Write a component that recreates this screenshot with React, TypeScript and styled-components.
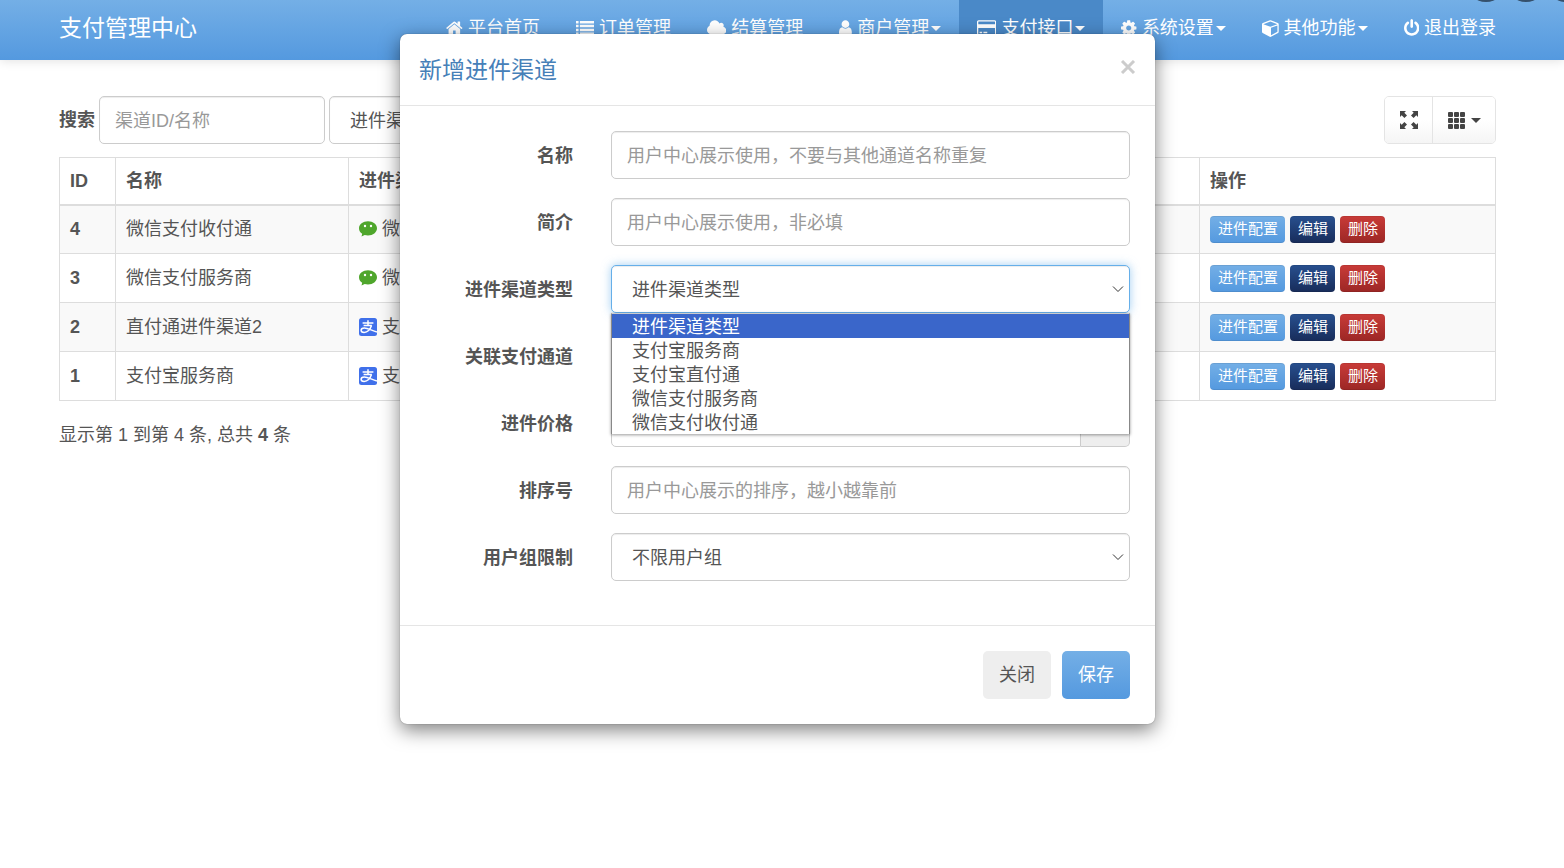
import React from "react";
import styled, { createGlobalStyle, css } from "styled-components";

const GlobalStyle = createGlobalStyle`
  *, *::before, *::after { box-sizing: border-box; }
  html, body { margin: 0; min-height: 100%; background: #fff; }
  body, button, input, select {
    font-family: "Liberation Sans", "Noto Sans CJK SC", sans-serif;
    font-size: 18px;
    line-height: 26px;
    color: #555;
  }
  h1, h2, p { margin: 0; font-weight: 400; }
`;

const blueGradient = "linear-gradient(#74afe6, #5499df)";

/* ---------- icons ---------- */

const FontIcon = styled.svg`
  height: 18px;
  width: auto;
  flex: none;
  fill: currentColor;
`;

const icons = {
  home: {
    box: "64 0 1664 1792",
    d: "M1472 992v480q0 26-19 45t-45 19h-384v-384h-256v384h-384q-26 0-45-19t-19-45v-480q0-1 .5-3t.5-3l575-474 575 474q1 2 1 6zm223-69l-62 74q-8 9-21 11h-3q-13 0-21-7l-692-577-692 577q-12 8-24 7-13-2-21-11l-62-74q-8-10-7-23.5t11-21.5l719-599q32-26 76-26t76 26l244 204v-195q0-14 9-23t23-9h192q14 0 23 9t9 23v408l219 182q10 8 11 21.5t-7 23.5z",
  },
  list: {
    box: "0 0 1792 1792",
    d: "M0 192h256v256H0zM384 192h1408v256H384zM0 576h256v256H0zM384 576h1408v256H384zM0 960h256v256H0zM384 960h1408v256H384zM0 1344h256v256H0zM384 1344h1408v256H384z",
  },
  cloud: {
    box: "64 0 1920 1792",
    d: "M1984 1152q0 159-112.5 271.5t-271.5 112.5h-1088q-185 0-316.5-131.5t-131.5-316.5q0-132 71-241.5t187-163.5q-2-28-2-43 0-212 150-362t362-150q158 0 286.5 88t187.5 230q70-62 166-62 106 0 181 75t75 181q0 75-41 138 129 30 213 134.5t84 239.5z",
  },
  user: {
    box: "0 0 1280 1792",
    d: "M1280 1399q0 109-62.5 187t-150.5 78h-854q-88 0-150.5-78t-62.5-187q0-85 8.5-160.5t31.5-152 58.5-131 94-89 134.5-34.5q131 128 313 128t313-128q76 0 134.5 34.5t94 89 58.5 131 31.5 152 8.5 160.5zm-256-887q0 159-112.5 271.5t-271.5 112.5-271.5-112.5-112.5-271.5 112.5-271.5 271.5-112.5 271.5 112.5 112.5 271.5z",
  },
  card: {
    box: "0 0 1920 1792",
    d: "M1760 128q66 0 113 47t47 113v1216q0 66-47 113t-113 47h-1600q-66 0-113-47t-47-113v-1216q0-66 47-113t113-47h1600zm-1600 128q-13 0-22.5 9.5t-9.5 22.5v224h1664v-224q0-13-9.5-22.5t-22.5-9.5h-1600zm1600 1280q13 0 22.5-9.5t9.5-22.5v-608h-1664v608q0 13 9.5 22.5t22.5 9.5h1600zm-1504-128v-128h256v128h-256zm384 0v-128h384v128h-384z",
  },
  cog: {
    box: "128 0 1536 1792",
    d: "M1152 896q0-106-75-181t-181-75-181 75-75 181 75 181 181 75 181-75 75-181zm512-109v222q0 12-8 23t-20 13l-185 28q-19 54-39 91 35 50 107 138 10 12 10 25t-9 23q-27 37-99 108t-94 71q-12 0-26-9l-138-108q-44 23-91 38-16 136-29 186-7 28-36 28h-222q-14 0-24.5-8.5t-11.5-21.5l-28-184q-49-16-90-37l-141 107q-10 9-25 9-14 0-25-11-126-114-165-168-7-10-7-23 0-12 8-23 15-21 51-66.5t54-70.5q-27-50-41-99l-183-27q-13-2-21-12.5t-8-23.5v-222q0-12 8-23t19-13l186-28q14-46 39-92-40-57-107-138-10-12-10-24 0-10 9-23 26-36 98.5-107.5t94.5-71.5q13 0 26 10l138 107q44-23 91-38 16-136 29-186 7-28 36-28h222q14 0 24.5 8.5t11.5 21.5l28 184q49 16 90 37l142-107q9-9 24-9 13 0 25 10 129 119 165 170 7 8 7 22 0 12-8 23-15 21-51 66.5t-54 70.5q26 50 41 98l183 28q13 2 21 12.5t8 23.5z",
  },
  cube: {
    box: "0 0 1664 1792",
    d: "M896 1629l640-349v-636l-640 233v752zm-64-865l698-254-698-254-698 254zm832-252v768q0 35-18 65t-49 47l-704 384q-28 16-61 16t-61-16l-704-384q-31-17-49-47t-18-65v-768q0-40 23-73t61-47l704-256q22-8 44-8t44 8l704 256q38 14 61 47t23 73z",
  },
  power: {
    box: "128 0 1536 1792",
    d: "M1664 896q0 156-61 298t-164 245-245 164-298 61-298-61-245-164-164-245-61-298q0-182 80.5-343t226.5-270q43-32 95.5-25t83.5 50q32 42 24.5 94.5t-49.5 84.5q-98 74-151.5 181t-53.5 228q0 104 40.5 198.5t109.5 163.5 163.5 109.5 198.5 40.5 198.5-40.5 163.5-109.5 109.5-163.5 40.5-198.5q0-121-53.5-228t-151.5-181q-42-32-49.5-84.5t24.5-94.5q31-43 84-50t95 25q146 109 226.5 270t80.5 343zm-640-768v640q0 52-38 90t-90 38-90-38-38-90v-640q0-52 38-90t90-38 90 38 38 90z",
  },
};

type IconName = keyof typeof icons;

const Icon = ({ name }: { name: IconName }) => (
  <FontIcon viewBox={icons[name].box} aria-hidden="true">
    <path d={icons[name].d} />
  </FontIcon>
);

const Caret = styled.span`
  width: 10px;
  height: 5px;
  border: 5px solid transparent;
  border-top-color: currentColor;
  border-bottom: 0;
`;

const BrandSvg = styled.svg`
  width: 18px;
  height: 18px;
  flex: none;
`;

const WechatIcon = () => (
  <BrandSvg viewBox="0 0 18 18" aria-hidden="true">
    <path
      d="M9 1.2c-5 0-9 3-9 7 0 2.300 1.200 4.200 3.200 5.500l-.7 2.800 3.200-1.600c1 .3 2.100.5 3.300.5 5 0 9-3.100 9-7.200S14 1.200 9 1.200z"
      fill="#4fa62c"
    />
    <circle cx="6" cy="6" r="1.2" fill="#fff" />
    <circle cx="12" cy="6" r="1.2" fill="#fff" />
  </BrandSvg>
);

const AlipayIcon = () => (
  <BrandSvg viewBox="0 0 18 18" aria-hidden="true">
    <rect width="18" height="18" rx="2.5" fill="#4070ea" />
    <g fill="none" stroke="#fff" strokeWidth="1.5">
      <path d="M3.6 4.900h10.800M9 2.200v5.400M4.600 7.600h8.200" />
      <path d="M12.500 7.600c-1.200 3.600-4 6.800-7.400 6.800-2 0-3-1-3-2.200 0-1.400 1.400-2.300 3.200-2.300 3.400 0 6.900 2.400 12.700 4.200" />
    </g>
  </BrandSvg>
);

const ToolSvg = styled.svg`
  width: 18px;
  height: 18px;
  fill: #444;
`;

const FullscreenIcon = () => (
  <ToolSvg viewBox="0 0 18 18" aria-hidden="true">
    {[0, 90, 180, 270].map((turn) => (
      <path key={turn} transform={`rotate(${turn} 9 9)`} d="M0 0h6L4.300 1.700 7 4.400 4.400 7 1.700 4.300 0 6z" />
    ))}
  </ToolSvg>
);

const GridIcon = () => (
  <ToolSvg viewBox="0 0 18 18" aria-hidden="true">
    {[1, 7, 13].map((y) =>
      [0, 6, 12].map((x) => <rect key={`${x}-${y}`} x={x} y={y} width="5" height="5" rx="1" />)
    )}
  </ToolSvg>
);

/* ---------- navigation ---------- */

const NavBar = styled.header`
  position: relative;
  display: flex;
  justify-content: space-between;
  height: 60px;
  padding: 0 50px 0 59px;
  background: ${blueGradient};
  box-shadow: 0 1px 10px rgba(0, 0, 0, 0.12);
`;

const Brand = styled.a`
  padding-top: 15px;
  font-size: 23px;
  color: #fff;
  text-decoration: none;
  white-space: nowrap;
`;

const NavList = styled.nav`
  display: flex;
`;

const NavLink = styled.a<{ $active?: boolean }>`
  display: flex;
  align-items: center;
  gap: 5px;
  padding: 0 18px 4px;
  color: #fff;
  text-decoration: none;
  white-space: nowrap;
  ${(p) => p.$active && css`background: #4a89c8;`}
`;

const NavText = styled.span`
  display: flex;
  align-items: center;
  gap: 2px;
`;

const FloatingTools = styled.svg`
  position: absolute;
  top: 0;
  right: 0;
`;

const navItems: { icon: IconName; label: string; menu?: boolean; active?: boolean }[] = [
  { icon: "home", label: "平台首页" },
  { icon: "list", label: "订单管理" },
  { icon: "cloud", label: "结算管理" },
  { icon: "user", label: "商户管理", menu: true },
  { icon: "card", label: "支付接口", menu: true, active: true },
  { icon: "cog", label: "系统设置", menu: true },
  { icon: "cube", label: "其他功能", menu: true },
  { icon: "power", label: "退出登录" },
];

/* ---------- form controls ---------- */

const control = css`
  display: block;
  width: 100%;
  height: 48px;
  border: 1px solid #ccc;
  border-radius: 5px;
  background: #fff;
  box-shadow: inset 0 1px 1px rgba(0, 0, 0, 0.075);
  outline: 0;
`;

const TextInput = styled.input`
  ${control}
  padding: 2px 15px 0;
  &::placeholder { color: #999; opacity: 1; }
`;

const SelectWrap = styled.div`
  position: relative;
`;

const Select = styled.select<{ $focused?: boolean }>`
  ${control}
  padding: 1px 20px 0;
  appearance: none;
  ${(p) =>
    p.$focused &&
    css`
      border-color: #66afe9;
      box-shadow: inset 0 1px 1px rgba(0, 0, 0, 0.075), 0 0 10px rgba(102, 175, 233, 0.6);
    `}
`;

const Chevron = styled.svg`
  position: absolute;
  top: 20px;
  right: 6px;
  width: 12px;
  height: 8px;
  fill: none;
  stroke: #333;
  pointer-events: none;
`;

const OptionList = styled.ul`
  position: absolute;
  z-index: 2;
  top: 48px;
  left: 0;
  right: 0;
  margin: 0;
  padding: 0;
  list-style: none;
  background: #fff;
  border: 1px solid #888;
  border-top-color: #ccc;
  border-bottom: 0;
  box-shadow: 0 1px 3px rgba(0, 0, 0, 0.4);
`;

const Option = styled.li<{ $selected: boolean }>`
  height: 24px;
  padding: 1px 0 0 20px;
  line-height: 24px;
  color: ${(p) => (p.$selected ? "#fff" : "#555")};
  background: ${(p) => (p.$selected ? "#3a66ca" : "transparent")};
`;

const DropDown = ({ id, label, text, options }: { id: string; label?: string; text: string; options?: string[] }) => (
  <SelectWrap>
    <Select id={id} aria-label={label} $focused={!!options}>
      <option>{text}</option>
    </Select>
    <Chevron viewBox="0 0 12 8" aria-hidden="true">
      <path d="M1 1.500l5 5 5-5" />
    </Chevron>
    {options && (
      <OptionList role="listbox">
        {options.map((option) => (
          <Option key={option} role="option" aria-selected={option === text} $selected={option === text}>
            {option}
          </Option>
        ))}
      </OptionList>
    )}
  </SelectWrap>
);

/* ---------- page ---------- */

const Main = styled.main`
  padding: 36px 68px 0 59px;
`;

const Toolbar = styled.div`
  display: flex;
  align-items: center;
  gap: 4px;
  margin-bottom: 13px;
`;

const SearchLabel = styled.label`
  font-weight: 700;
`;

const SearchField = styled.div`
  width: 226px;
`;

const ButtonGroup = styled.div`
  display: flex;
  margin-left: auto;
  height: 48px;
  border: 1px solid #e4e4e4;
  border-radius: 5px;
  overflow: hidden;
`;

const ToolButton = styled.button`
  display: flex;
  align-items: center;
  gap: 5px;
  padding: 0 14px 0 15px;
  border: 0;
  color: #444;
  background: linear-gradient(#fff, #fff 50%, #f5f5f5);
  & + & { border-left: 1px solid #e4e4e4; }
`;

const Table = styled.table`
  width: 100%;
  table-layout: fixed;
  border-collapse: collapse;
  th, td {
    padding: 0 10px;
    border: 1px solid #ddd;
    text-align: left;
    white-space: nowrap;
  }
  thead th { height: 47px; border-bottom-width: 2px; }
  tbody tr { height: 49px; }
  tbody tr:nth-child(odd) { background: #f9f9f9; }
`;

const Col = styled.col<{ $width?: number }>`
  ${(p) => p.$width && css`width: ${p.$width}px;`}
`;

const Channel = styled.div`
  display: flex;
  align-items: center;
  gap: 5px;
`;

const Actions = styled.div`
  display: flex;
  gap: 5px;
`;

const tones = {
  info: blueGradient,
  primary: "linear-gradient(#28508f, #182c5a)",
  danger: "linear-gradient(#c93b38, #9c2725)",
};

const SmallButton = styled.button<{ $tone: keyof typeof tones }>`
  height: 27px;
  padding: 0 7px 0 8px;
  border: 1px solid rgba(0, 0, 0, 0.08);
  border-width: 1px 0;
  border-radius: 4px;
  font-size: 15px;
  line-height: 24px;
  color: #fff;
  background: ${(p) => tones[p.$tone]};
  background-origin: border-box;
`;

const Summary = styled.p`
  margin-top: 21px;
`;

const rows = [
  { id: 4, name: "微信支付收付通", wechat: true },
  { id: 3, name: "微信支付服务商", wechat: true },
  { id: 2, name: "直付通进件渠道2", wechat: false },
  { id: 1, name: "支付宝服务商", wechat: false },
];

/* ---------- dialog ---------- */

const Overlay = styled.div`
  position: absolute;
  z-index: 10;
  top: 0;
  left: 0;
  right: 0;
  padding: 34px 9px 34px 0;
`;

const Dialog = styled.section`
  width: 100%;
  max-width: 755px;
  margin: 0 auto;
  background: #fff;
  border-radius: 7px;
  box-shadow: 0 0 1px rgba(0, 0, 0, 0.5), 0 6px 19px rgba(0, 0, 0, 0.5);
`;

const DialogHeader = styled.header`
  display: flex;
  justify-content: space-between;
  align-items: center;
  height: 72px;
  padding: 0 19px;
  border-bottom: 1px solid #e5e5e5;
`;

const DialogTitle = styled.h2`
  font-size: 23px;
  color: #4680b8;
`;

const CloseButton = styled.button`
  display: flex;
  padding: 0 0 6px;
  border: 0;
  background: none;
`;

const CrossSvg = styled.svg`
  width: 16px;
  height: 14px;
  fill: none;
  stroke: #ccc;
  stroke-width: 3;
`;

const FormBody = styled.form`
  display: grid;
  gap: 19px;
  padding: 25px 25px 44px;
`;

const FormRow = styled.div`
  display: grid;
  grid-template-columns: 148px 1fr;
  column-gap: 38px;
  align-items: center;
`;

const RowLabel = styled.label`
  padding-top: 2px;
  font-weight: 700;
  text-align: right;
`;

const InputGroup = styled.div`
  display: flex;
  ${TextInput} { border-radius: 5px 0 0 5px; }
`;

const Addon = styled.span`
  flex: none;
  width: 49px;
  border: 1px solid #ccc;
  border-left: 0;
  border-radius: 0 5px 5px 0;
  background: #eee;
`;

const DialogFooter = styled.footer`
  display: flex;
  justify-content: flex-end;
  gap: 11px;
  padding: 25px;
  border-top: 1px solid #e5e5e5;
`;

const Button = styled.button<{ $primary?: boolean }>`
  height: 48px;
  padding: 0 16px;
  border: 0;
  border-radius: 5px;
  color: ${(p) => (p.$primary ? "#fff" : "#555")};
  background: ${(p) => (p.$primary ? blueGradient : "#eee")};
`;

const channelTypes = ["进件渠道类型", "支付宝服务商", "支付宝直付通", "微信支付服务商", "微信支付收付通"];

export default function App() {
  return (
    <>
      <GlobalStyle />
      <NavBar>
        <Brand href="#">支付管理中心</Brand>
        <NavList>
          {navItems.map((item) => (
            <NavLink key={item.label} href="#" $active={item.active}>
              <Icon name={item.icon} />
              <NavText>
                {item.label}
                {item.menu && <Caret />}
              </NavText>
            </NavLink>
          ))}
        </NavList>
        <FloatingTools width="100" height="3" viewBox="0 0 100 3" fill="#35506c" aria-hidden="true">
          <circle cx="22" cy="-18" r="20" />
          <circle cx="62" cy="-18" r="20" />
          <circle cx="102" cy="-18" r="20" />
        </FloatingTools>
      </NavBar>

      <Main>
        <Toolbar>
          <SearchLabel htmlFor="search">搜索</SearchLabel>
          <SearchField>
            <TextInput id="search" placeholder="渠道ID/名称" />
          </SearchField>
          <SearchField>
            <DropDown id="filter-type" label="进件渠道类型" text="进件渠道类型" />
          </SearchField>
          <ButtonGroup>
            <ToolButton type="button" aria-label="全屏">
              <FullscreenIcon />
            </ToolButton>
            <ToolButton type="button" aria-label="列">
              <GridIcon />
              <Caret />
            </ToolButton>
          </ButtonGroup>
        </Toolbar>

        <Table>
          <colgroup>
            <Col $width={56} />
            <Col $width={233} />
            <Col />
            <Col $width={296} />
          </colgroup>
          <thead>
            <tr>
              <th>ID</th>
              <th>名称</th>
              <th>进件渠道类型</th>
              <th>操作</th>
            </tr>
          </thead>
          <tbody>
            {rows.map((row) => (
              <tr key={row.id}>
                <th scope="row">{row.id}</th>
                <td>{row.name}</td>
                <td>
                  <Channel>
                    {row.wechat ? <WechatIcon /> : <AlipayIcon />}
                    {row.wechat ? "微信" : "支付宝"}
                  </Channel>
                </td>
                <td>
                  <Actions>
                    <SmallButton type="button" $tone="info">进件配置</SmallButton>
                    <SmallButton type="button" $tone="primary">编辑</SmallButton>
                    <SmallButton type="button" $tone="danger">删除</SmallButton>
                  </Actions>
                </td>
              </tr>
            ))}
          </tbody>
        </Table>
        <Summary>
          显示第 1 到第 4 条, 总共 <b>4</b> 条
        </Summary>
      </Main>

      <Overlay>
        <Dialog role="dialog" aria-labelledby="dialog-title">
          <DialogHeader>
            <DialogTitle id="dialog-title">新增进件渠道</DialogTitle>
            <CloseButton type="button" aria-label="关闭">
              <CrossSvg viewBox="0 0 16 14" aria-hidden="true">
                <path d="M2 1l12 12M14 1L2 13" />
              </CrossSvg>
            </CloseButton>
          </DialogHeader>
          <FormBody>
            <FormRow>
              <RowLabel htmlFor="name">名称</RowLabel>
              <TextInput id="name" placeholder="用户中心展示使用，不要与其他通道名称重复" />
            </FormRow>
            <FormRow>
              <RowLabel htmlFor="intro">简介</RowLabel>
              <TextInput id="intro" placeholder="用户中心展示使用，非必填" />
            </FormRow>
            <FormRow>
              <RowLabel htmlFor="type">进件渠道类型</RowLabel>
              <DropDown id="type" text="进件渠道类型" options={channelTypes} />
            </FormRow>
            <FormRow>
              <RowLabel htmlFor="channel">关联支付通道</RowLabel>
              <TextInput id="channel" />
            </FormRow>
            <FormRow>
              <RowLabel htmlFor="price">进件价格</RowLabel>
              <InputGroup>
                <TextInput id="price" />
                <Addon />
              </InputGroup>
            </FormRow>
            <FormRow>
              <RowLabel htmlFor="sort">排序号</RowLabel>
              <TextInput id="sort" placeholder="用户中心展示的排序，越小越靠前" />
            </FormRow>
            <FormRow>
              <RowLabel htmlFor="group">用户组限制</RowLabel>
              <DropDown id="group" text="不限用户组" />
            </FormRow>
          </FormBody>
          <DialogFooter>
            <Button type="button">关闭</Button>
            <Button type="button" $primary>保存</Button>
          </DialogFooter>
        </Dialog>
      </Overlay>
    </>
  );
}
